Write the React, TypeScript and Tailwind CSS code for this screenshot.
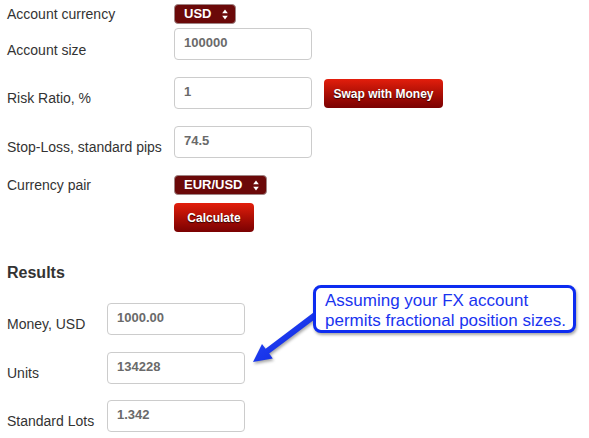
import React from "react";

const SelectArrows = () => (
  <svg width="6" height="11" viewBox="0 0 6 11" className="shrink-0">
    <path d="M3 0.5 L5.8 4.3 L0.2 4.3 Z" fill="#fff" />
    <path d="M3 10.5 L5.8 6.7 L0.2 6.7 Z" fill="#fff" />
  </svg>
);

function Select({ value, width }: { value: string; width: string }) {
  return (
    <div
      className={`${width} h-[20px] flex items-center justify-between pl-[9px] pr-[7px] rounded-[4px] border border-[#a08585] bg-[#6b0909] text-white font-bold text-[13px]`}
    >
      <span>{value}</span>
      <SelectArrows />
    </div>
  );
}

function Field({ value }: { value: string }) {
  return (
    <div className="w-[138px] h-[32px] flex items-center pl-[9px] pb-[2px] rounded-[4px] border border-[#cccccc] bg-white text-[13px] font-bold text-[#6a6a6a]">
      {value}
    </div>
  );
}

function RedButton({ label, width }: { label: string; width: string }) {
  return (
    <button
      className={`${width} h-[29px] rounded-[4px] bg-gradient-to-b from-[#e31e0c] to-[#7a0202] text-white text-[12px] font-bold [text-shadow:0_1px_1px_rgba(0,0,0,0.7)]`}
    >
      {label}
    </button>
  );
}

export default function App() {
  return (
    <div className="relative w-[589px] h-[438px] overflow-hidden bg-white pl-[7px] pt-[4px] font-['Liberation_Sans',Arial,sans-serif] text-[14px] text-[#333]">
      {/* Calculator inputs */}
      <div className="flex flex-col">
        <div className="flex items-center">
          <span className="w-[167px] leading-[17px]">Account currency</span>
          <Select value="USD" width="w-[62px]" />
        </div>
        <div className="flex items-start mt-[4px]">
          <span className="w-[167px] leading-[17px] pt-[14px]">Account size</span>
          <Field value="100000" />
        </div>
        <div className="flex items-start mt-[17px]">
          <span className="w-[167px] leading-[17px] pt-[13px]">Risk Ratio, %</span>
          <Field value="1" />
          <div className="ml-[12px] mt-[2px]">
            <RedButton label="Swap with Money" width="w-[119px]" />
          </div>
        </div>
        <div className="flex items-start mt-[17px]">
          <span className="w-[167px] leading-[17px] pt-[13px]">Stop-Loss, standard pips</span>
          <Field value="74.5" />
        </div>
        <div className="flex items-center mt-[17px]">
          <span className="w-[167px] leading-[17px]">Currency pair</span>
          <Select value="EUR/USD" width="w-[93px]" />
        </div>
        <div className="flex mt-[8px] pl-[167px]">
          <RedButton label="Calculate" width="w-[80px]" />
        </div>
      </div>

      {/* Results */}
      <h2 className="mt-[31px] text-[16px] leading-[20px] font-bold text-[#333]">Results</h2>
      <div className="flex flex-col mt-[20px]">
        <div className="flex items-start">
          <span className="w-[100px] leading-[17px] pt-[13px]">Money, USD</span>
          <Field value="1000.00" />
        </div>
        <div className="flex items-start mt-[17px]">
          <span className="w-[100px] leading-[17px] pt-[13px]">Units</span>
          <Field value="134228" />
        </div>
        <div className="flex items-start mt-[16px]">
          <span className="w-[100px] leading-[17px] pt-[13px]">Standard Lots</span>
          <Field value="1.342" />
        </div>
      </div>

      {/* Annotation arrow */}
      <svg
        className="absolute left-0 top-0 [filter:drop-shadow(1px_2px_1.5px_rgba(0,0,0,0.35))]"
        width="589"
        height="438"
      >
        <defs>
          <linearGradient id="arrowFill" x1="0" y1="0" x2="1" y2="1">
            <stop offset="0" stopColor="#2a4cff" />
            <stop offset="1" stopColor="#0a22d8" />
          </linearGradient>
        </defs>
        <polygon
          points="253,362 262,344 265.6,348.8 316.2,310.6 319.8,315.4 269.2,353.6 272.8,358.4"
          fill="url(#arrowFill)"
        />
      </svg>

      {/* Annotation callout */}
      <div className="absolute left-[313px] top-[285px] w-[263px] h-[48px] rounded-[8px] border-[3px] border-[#0d2cf0] bg-white pl-[9px] pt-[3px] shadow-[1px_2px_3px_rgba(0,0,0,0.35)] text-[17px] leading-[20px] text-[#1a34f0]">
        Assuming your FX account
        <br />
        permits fractional position sizes.
      </div>
    </div>
  );
}
